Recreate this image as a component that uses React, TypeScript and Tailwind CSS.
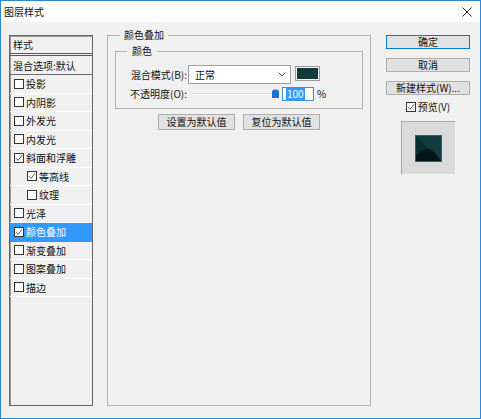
import React from 'react';

const font = { fontFamily: '"Noto Sans CJK SC", "Noto Sans", sans-serif' };

const Check = () => (
  <svg width="8" height="8" viewBox="0 0 8 8">
    <polyline points="1,4.2 3,6.3 7.2,1.2" fill="none" stroke="#555" strokeWidth="1" />
  </svg>
);

const Box = ({ checked }: { checked?: boolean }) => (
  <span className="w-[10px] h-[10px] border border-[#333] bg-white flex items-center justify-center shrink-0">
    {checked && <Check />}
  </span>
);

interface Item {
  label: string;
  checked?: boolean;
  indent?: boolean;
  active?: boolean;
}

const items: Item[] = [
  { label: '投影' },
  { label: '内阴影' },
  { label: '外发光' },
  { label: '内发光' },
  { label: '斜面和浮雕', checked: true },
  { label: '等高线', checked: true, indent: true },
  { label: '纹理', indent: true },
  { label: '光泽' },
  { label: '颜色叠加', checked: true, active: true },
  { label: '渐变叠加' },
  { label: '图案叠加' },
  { label: '描边' },
];

const Btn = ({ children, primary }: { children: React.ReactNode; primary?: boolean }) => (
  <button
    className={`w-full h-[14px] flex items-center justify-center text-[10px] leading-none bg-[#e1e1e1] border ${
      primary ? 'border-[#0078d7]' : 'border-[#adadad]'
    }`}
  >
    {children}
  </button>
);

export default function App() {
  return (
    <div
      className="w-[481px] h-[419px] border border-[#2e86d9] bg-[#f0f0f0] flex flex-col text-[#111]"
      style={font}
    >
      {/* title bar */}
      <div className="h-[21px] bg-white flex items-center justify-between pl-[3px] pr-[8px] shrink-0">
        <span className="text-[10px] leading-none">图层样式</span>
        <svg width="10" height="10" viewBox="0 0 10 10">
          <path d="M0.5 0.5 L9.5 9.5 M9.5 0.5 L0.5 9.5" stroke="#222" strokeWidth="1" />
        </svg>
      </div>

      <div className="flex-1 flex items-start pl-[8px] pt-[7px]">
        {/* styles list */}
        <div className="mt-[6px] w-[84px] h-[371px] border border-[#646464] shadow-[inset_1px_1px_0_#9a9a9a] flex flex-col text-[10px]">
          <div className="h-[17px] flex items-center pl-[3px] shrink-0">样式</div>
          <div className="border-b-[3px] border-double border-[#5a5a5a]" />
          <div className="h-[19px] flex items-center pl-[3px] border-b border-[#6a6a6a] shrink-0">
            混合选项:默认
          </div>
          {items.map((it) => (
            <div
              key={it.label}
              className={`h-[18.5px] flex items-center gap-[2px] border-b shrink-0 ${
                it.indent ? 'pl-[17px]' : 'pl-[4px]'
              } ${it.active ? 'bg-[#3399ff] text-white border-[#3399ff]' : 'border-white'}`}
            >
              <Box checked={it.checked} />
              <span>{it.label}</span>
            </div>
          ))}
        </div>

        {/* color overlay group */}
        <fieldset className="ml-[14px] w-[264px] h-[377px] border border-[#b0b0b0] px-[7px] text-[10px]">
          <legend className="ml-[5px] px-[4px] leading-[12px]">颜色叠加</legend>
          <fieldset className="mt-[4px] w-[248px] border border-[#b0b0b0] pb-[7px]">
            <legend className="ml-[11px] px-[5px] leading-[12px]">颜色</legend>
            <div className="mt-[8px] flex items-start">
              <div className="w-[71px] h-[19px] flex items-center justify-end">混合模式(B):</div>
              <div className="ml-[1px] w-[103px] h-[19px] bg-white border border-[#a0a0a0] flex items-center justify-between pl-[6px] pr-[4px]">
                <span>正常</span>
                <svg width="8" height="5" viewBox="0 0 8 5">
                  <polyline points="0.5,0.5 4,4 7.5,0.5" fill="none" stroke="#555" strokeWidth="1" />
                </svg>
              </div>
              <div className="ml-[4px] mt-[1px] w-[25px] h-[15px] border border-[#9a9a9a] p-[1px] bg-[#f8f8f8]">
                <div className="w-full h-full bg-[#0f3b3d]" />
              </div>
            </div>
            <div className="mt-[2px] flex items-center">
              <div className="w-[71px] h-[14px] flex items-center justify-end">不透明度(O):</div>
              <div className="ml-[5px] w-[87px] h-[14px] relative">
                <div className="absolute left-0 right-[3px] top-[6px] h-[2px] bg-[#e2e2e2] border-b border-white" />
                <svg className="absolute right-0 top-[2px]" width="7" height="9" viewBox="0 0 7 9">
                  <path d="M0 3 Q0 1 2 0.5 L5 0.5 Q7 1 7 3 L7 9 L0 9 Z" fill="#1a73d0" />
                </svg>
              </div>
              <div className="ml-[3px] w-[32px] h-[14px] bg-white border border-[#3c8fd9] flex items-center pl-[3px]">
                <span className="bg-[#3399ff] text-white leading-[12px] px-[1px]">100</span>
              </div>
              <span className="ml-[3px]">%</span>
            </div>
          </fieldset>
          <div className="mt-[5px] flex justify-center gap-[8px]">
            <button className="w-[77px] h-[16px] bg-[#e1e1e1] border border-[#adadad] text-[10px] leading-none">
              设置为默认值
            </button>
            <button className="w-[77px] h-[16px] bg-[#e1e1e1] border border-[#adadad] text-[10px] leading-none">
              复位为默认值
            </button>
          </div>
        </fieldset>

        {/* right column */}
        <div className="ml-[15px] mt-[6px] w-[84px] flex flex-col items-center text-[10px]">
          <Btn primary>确定</Btn>
          <div className="h-[9px]" />
          <Btn>取消</Btn>
          <div className="h-[9px]" />
          <Btn>新建样式(W)...</Btn>
          <div className="mt-[6px] h-[12px] flex items-center gap-[2px]">
            <Box checked />
            <span className="leading-none">预览(V)</span>
          </div>
          <div className="mt-[8px] w-[55px] h-[54px] bg-[#dadada] border border-[#a8a8a8] border-r-[#f4f4f4] border-b-[#f4f4f4] flex items-center justify-center">
            <svg width="27" height="27" viewBox="0 0 27 27">
              <rect x="0" y="0" width="27" height="27" fill="#123d40" />
              <polygon points="0,0 14,14 0,27" fill="#0c2c2f" />
              <path d="M0 21 Q5 17 9 15 Q15 12 19 17 L27 27 L0 27 Z" fill="#041618" />
              <rect x="0.5" y="0.5" width="26" height="26" fill="none" stroke="#3a5a5c" strokeWidth="1" />
            </svg>
          </div>
        </div>
      </div>
    </div>
  );
}
